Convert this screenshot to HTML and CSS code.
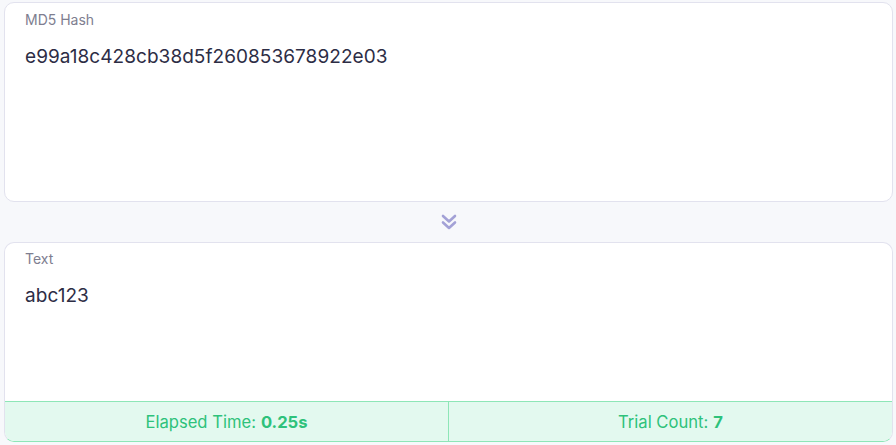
FILE: index.html
```html
<!DOCTYPE html>
<html>
<head>
<meta charset="utf-8">
<link rel="stylesheet" href="styles.css">
</head>
<body>
<div class="page">
  <div class="card">
    <div class="label">MD5 Hash</div>
    <div class="value">e99a18c428cb38d5f260853678922e03</div>
  </div>
  <div class="arrow">
    <svg width="18" height="18" viewBox="0 0 18 18"><path d="M3 3 L9 8.5 L15 3 M3 9.5 L9 15 L15 9.5" fill="none" stroke="#a3a1d6" stroke-width="2.6" stroke-linecap="round" stroke-linejoin="round"/></svg>
  </div>
  <div class="card result">
    <div class="body">
      <div class="label">Text</div>
      <div class="value">abc123</div>
    </div>
    <div class="stats">
      <div class="stat">Elapsed Time: <b>0.25s</b></div>
      <div class="stat">Trial Count: <b>7</b></div>
    </div>
  </div>
</div>
</body>
</html>
```
FILE: styles.css
```css
html, body { margin: 0; padding: 0; background: #f7f8fb; }
body { font-family: Inter, "Noto Sans", sans-serif; }
.page { padding: 2px 3px 0 4px; display: flex; flex-direction: column; }
.card {
  background: #fff;
  border: 1px solid #e2e2ee;
  border-radius: 10px;
  height: 200px;
  box-sizing: border-box;
  padding: 7px 20px 0 20px;
}
.label { font-size: 14px; color: #7e7e90; line-height: 20px; }
.value { font-size: 19px; color: #2d2d45; margin-top: 14px; line-height: 26px; letter-spacing: 0.05px; }
.arrow { height: 40px; display: flex; align-items: center; justify-content: center; padding-left: 0px; }
.arrow svg { display: block; }
.result { padding: 0; display: flex; flex-direction: column; height: 200px; overflow: hidden; }
.result .body { flex: 1; padding: 6px 20px 0 20px; }
.result .value { margin-top: 14px; }
.stats {
  height: 40px;
  display: flex;
  background: #e3f9ef;
  border-top: 1px solid #8ee6b7;
  box-sizing: border-box;
}
.result { border-color: #e2e2ee #e2e2ee #8ee6b7 #e2e2ee; }
.stat {
  flex: 1;
  display: flex;
  align-items: center;
  justify-content: center;
  font-size: 16.6px;
  color: #2ec27b;
}
.stat + .stat { border-left: 1px solid #8ee6b7; }
.stat b { font-weight: 700; margin-left: 5px; }
```
